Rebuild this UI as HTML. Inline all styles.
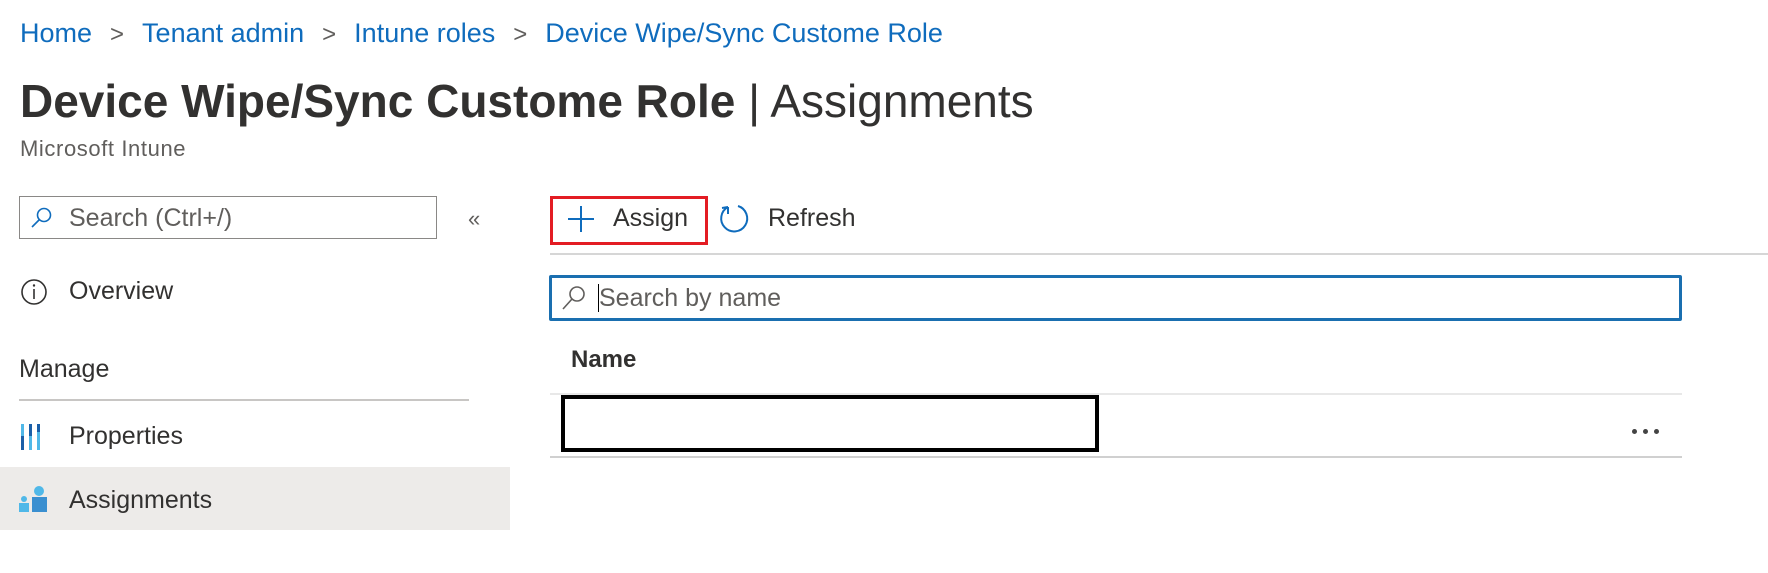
<!DOCTYPE html>
<html><head><style>
body{margin:0;width:1768px;height:573px;background:#fff;font-family:"Liberation Sans",sans-serif;position:relative;overflow:hidden;color:#323130}
.a{position:absolute;white-space:nowrap}
.bc{top:18px;left:20px;font-size:27px;color:#0f6cbd}
.bc span.s{color:#605e5c;margin:0 18px;font-size:24px}
.t{font-size:25px}
</style></head><body>
<div class="a bc">Home<span class="s">&gt;</span>Tenant admin<span class="s">&gt;</span>Intune roles<span class="s">&gt;</span>Device Wipe/Sync Custome Role</div>
<div class="a" style="top:74px;left:20px;font-size:46px;color:#323130"><b>Device Wipe/Sync Custome Role</b> | Assignments</div>
<div class="a" style="top:136px;left:20px;font-size:22px;color:#605e5c;letter-spacing:0.6px">Microsoft Intune</div>

<div class="a" style="left:19px;top:196px;width:418px;height:43px;border:1px solid #8a8886;box-sizing:border-box"></div>
<svg class="a" style="left:30px;top:206px" width="24" height="24"><circle cx="14" cy="9" r="6.5" fill="none" stroke="#0f6cbd" stroke-width="1.6"/><line x1="9.5" y1="13.5" x2="2" y2="21" stroke="#0f6cbd" stroke-width="1.6"/></svg>
<div class="a t" style="left:69px;top:204px;color:#605e5c">Search (Ctrl+/)</div>
<div class="a" style="left:468px;top:206px;font-size:22px;color:#605e5c">«</div>

<svg class="a" style="left:20px;top:278px" width="30" height="30"><circle cx="14" cy="14" r="12" fill="none" stroke="#323130" stroke-width="1.6"/><line x1="14" y1="11" x2="14" y2="21" stroke="#323130" stroke-width="1.6"/><circle cx="14" cy="7.5" r="1.2" fill="#323130"/></svg>
<div class="a t" style="left:69px;top:277px">Overview</div>
<div class="a t" style="left:19px;top:355px">Manage</div>
<div class="a" style="left:19px;top:399px;width:450px;height:2px;background:#c8c6c4"></div>
<svg class="a" style="left:20px;top:422px" width="28" height="30"><rect x="1" y="2" width="3" height="26" fill="#50b8e8"/><rect x="9" y="2" width="3" height="26" fill="#50b8e8"/><rect x="9" y="2" width="3" height="12" fill="#1a5fa8"/><rect x="17" y="2" width="3" height="26" fill="#50b8e8"/><rect x="1" y="14" width="3" height="14" fill="#1a5fa8"/><rect x="17" y="2" width="3" height="8" fill="#1a5fa8"/></svg>
<div class="a t" style="left:69px;top:422px">Properties</div>
<div class="a" style="left:0;top:467px;width:510px;height:63px;background:#edebe9"></div>
<svg class="a" style="left:18px;top:484px" width="32" height="30"><circle cx="21" cy="7" r="5" fill="#50b8e8"/><rect x="14" y="13" width="15" height="15" fill="#3a8fd0"/><circle cx="6" cy="15" r="3" fill="#50b8e8"/><rect x="1" y="19" width="10" height="9" fill="#50b8e8"/></svg>
<div class="a t" style="left:69px;top:486px">Assignments</div>

<div class="a" style="left:550px;top:196px;width:158px;height:49px;border:3px solid #e31c23;box-sizing:border-box"></div>
<svg class="a" style="left:566px;top:204px" width="30" height="30"><line x1="15" y1="2" x2="15" y2="28" stroke="#0f6cbd" stroke-width="2"/><line x1="2" y1="15" x2="28" y2="15" stroke="#0f6cbd" stroke-width="2"/></svg>
<div class="a t" style="left:613px;top:204px">Assign</div>
<svg class="a" style="left:718px;top:202px" width="34" height="34"><path d="M10 5 A13 13 0 1 0 20 4" fill="none" stroke="#0f6cbd" stroke-width="2"/><path d="M10 5 L10 12 M10 5 L4 6" fill="none" stroke="#0f6cbd" stroke-width="2"/></svg>
<div class="a t" style="left:768px;top:204px">Refresh</div>
<div class="a" style="left:550px;top:253px;width:1218px;height:2px;background:#d6d6d6"></div>

<div class="a" style="left:549px;top:275px;width:1133px;height:46px;border:3px solid #1a6fb0;border-radius:2px;box-sizing:border-box"></div>
<svg class="a" style="left:560px;top:284px" width="28" height="28"><circle cx="17" cy="10" r="7" fill="none" stroke="#605e5c" stroke-width="1.6"/><line x1="12" y1="15" x2="3" y2="25" stroke="#605e5c" stroke-width="1.6"/></svg>
<div class="a" style="left:598px;top:284px;width:1px;height:28px;background:#000"></div>
<div class="a t" style="left:599px;top:284px;color:#605e5c">Search by name</div>

<div class="a" style="left:571px;top:346px;font-size:24px;font-weight:bold;color:#323130">Name</div>
<div class="a" style="left:550px;top:393px;width:1132px;height:2px;background:#e8e8e8"></div>
<div class="a" style="left:550px;top:456px;width:1132px;height:2px;background:#d0d0d0"></div>
<div class="a" style="left:561px;top:395px;width:538px;height:57px;border:4px solid #000;box-sizing:border-box;background:#fff"></div>
<div class="a" style="left:1632px;top:421px">
<span style="display:inline-block;width:5px;height:5px;border-radius:3px;background:#444;margin-right:6px"></span><span style="display:inline-block;width:5px;height:5px;border-radius:3px;background:#444;margin-right:6px"></span><span style="display:inline-block;width:5px;height:5px;border-radius:3px;background:#444"></span></div>
</body></html>
